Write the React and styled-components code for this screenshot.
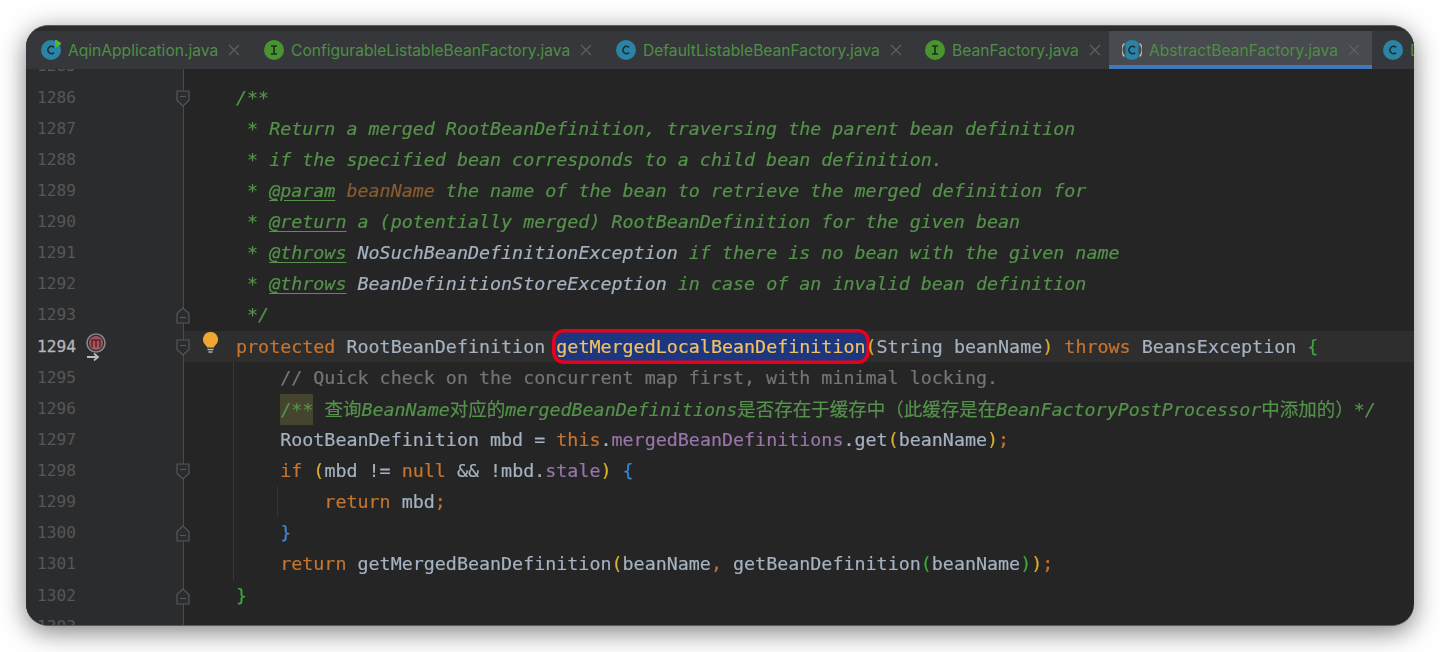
import styled, { createGlobalStyle } from 'styled-components';

const GlobalStyle = createGlobalStyle`
  html, body { margin: 0; background: #fff; }
`;

const MONO = `"DejaVu Sans Mono", "Noto Sans CJK SC", monospace`;

const Page = styled.div`
  height: 652px;
  box-sizing: border-box;
  padding: 25px 26px;
  overflow: hidden;
`;

const Window = styled.div`
  height: 601px;
  box-sizing: border-box;
  border-radius: 22px;
  border-top: 1px solid #595b5d;
  border-bottom: 1px solid #595b5d;
  overflow: hidden;
  background: #252525;
  box-shadow: 0 6px 26px rgba(0, 0, 0, 0.5);
`;

const Inner = styled.div`
  display: flex;
  flex-direction: column;
  height: 100%;
  filter: blur(0.55px);
`;

const TabBar = styled.div`
  flex: none;
  height: 38px;
  border-top: 5px solid #2b2c2e;
  background: #35373b;
  display: flex;
  overflow: hidden;
`;

const Tab = styled.div`
  flex: none;
  box-sizing: border-box;
  height: 38px;
  width: ${(p) => p.$width}px;
  padding: 4px 0 0 ${(p) => p.$pad}px;
  display: flex;
  align-items: center;
  gap: 7px;
  background: ${(p) => (p.$active ? '#474a4e' : 'transparent')};
  border-bottom: 4px solid ${(p) => (p.$active ? '#4179c0' : 'transparent')};
  font: 15.6px Inter, "Liberation Sans", sans-serif;
  color: #4f8f45;
  white-space: nowrap;
`;

const TabClose = styled.span`
  display: flex;
  margin-left: 3px;
  color: #5e6164;
`;

const Editor = styled.div`
  flex: 1;
  min-height: 0;
  overflow: hidden;
`;

const Lines = styled.div`
  margin-top: -18.6px;
`;

const Row = styled.div`
  display: flex;
  height: 31.125px;
  line-height: 31.125px;
  background: ${(p) => (p.$current ? '#2e2e2e' : 'transparent')};
`;

const Gutter = styled.div`
  flex: none;
  box-sizing: border-box;
  width: 158px;
  padding-left: 11px;
  background: #2b2c2e;
  border-right: 1px solid #4a4b4d;
  position: relative;
  display: flex;
  align-items: center;
`;

const LineNumber = styled.span`
  font: 400 16.2px/31px ${MONO};
  color: ${(p) => (p.$current ? '#b4b6b8' : '#55575a')};
  -webkit-text-stroke: ${(p) => (p.$current ? '0.3px' : '0')};
`;

const GutterBadge = styled.span`
  display: flex;
  margin-left: 9px;
  margin-top: 1px;
`;

const FoldMark = styled.span`
  position: absolute;
  right: -7px;
  top: 8px;
  display: flex;
`;

const Marker = styled.div`
  flex: none;
  width: 52px;
  box-sizing: border-box;
  padding: 0 0 0 18px;
  display: flex;
  align-items: flex-start;
`;

const Code = styled.pre`
  margin: 0;
  position: relative;
  flex: 1;
  font: 18.35px/31.125px ${MONO};
  color: #a5b2c2;
  white-space: pre;
  -webkit-text-stroke: 0.2px;
`;

const Guide = styled.i`
  position: absolute;
  top: 0;
  bottom: 0;
  left: ${(p) => p.$left}px;
  width: 1px;
  background: ${(p) => p.$color};
`;

const COLORS = {
  doc: '#55924b',
  tag: '#55924b',
  docRef: '#a5b2c2',
  param: '#8a5c2e',
  comment: '#757575',
  kw: '#c57530',
  field: '#9876aa',
  paren: '#d8ae30',
  blue: '#3b86d8',
  green: '#3fa63f',
};

const Token = styled.span`
  color: ${(p) => COLORS[p.$k] || '#a5b2c2'};
  font-style: ${(p) => (['doc', 'tag', 'docRef', 'param'].includes(p.$k) ? 'italic' : 'normal')};
  text-decoration: ${(p) => (p.$k === 'tag' ? 'underline' : 'none')};
  text-underline-offset: 3px;
`;

const DocStart = styled.span`
  display: inline-block;
  background: #45452e;
  color: #55924b;
  line-height: 31px;
`;

const Selected = styled.span`
  color: #f5c060;
  background: #1c3680;
  border-radius: 8px;
  padding: 3px 0;
  box-shadow: 0 0 0 0.5px #1c3680, 0 0 0 4px #ea0018;
`;

const Zh = styled.span`
  color: #55924b;
  font-family: "Noto Sans CJK SC", sans-serif;
  font-size: 18.5px;
`;

const CloseIcon = () => (
  <svg width="12" height="12" viewBox="0 0 12 12" fill="none" stroke="currentColor" strokeWidth="1.2">
    <path d="M1 1l10 10M11 1L1 11" />
  </svg>
);

const FileIcon = ({ kind }) => {
  const isInterface = kind === 'i';
  const fill = isInterface ? '#4a9331' : '#2b83a6';
  return (
    <svg width="20" height="20" viewBox="0 0 20 20" style={{ flex: 'none' }}>
      <circle cx="10" cy="10" r="10" fill={fill} />
      {kind === 'abstract' && (
        <>
          <rect x="-1" y="0" width="4.5" height="20" fill="#474a4e" />
          <rect x="16.5" y="0" width="4.5" height="20" fill="#474a4e" />
          <path d="M2.5 3.5a9 9 0 0 0 0 13M17.5 3.5a9 9 0 0 1 0 13" fill="none" stroke="#aeb2b5" strokeWidth="1.6" />
        </>
      )}
      {isInterface ? (
        <path d="M7 6h6M7 14h6M10 6v8" stroke="#20301c" strokeWidth="1.7" fill="none" />
      ) : (
        <path d="M13 7.4a3.6 3.6 0 1 0 0 5.2" stroke="#16313d" strokeWidth="1.7" fill="none" />
      )}
      {kind === 'run' && <path d="M14 -1l7 4.5-7 4.5z" fill="#4fb52f" />}
    </svg>
  );
};

const FoldIcon = ({ up }) => (
  <svg width="14" height="17" viewBox="0 0 14 17" fill="#2b2c2e" stroke="#55575a" strokeWidth="1.2">
    <path d={up ? 'M1 16V6.5L7 1l6 5.5V16z' : 'M1 1v9.5L7 16l6-5.5V1z'} />
    <path d={up ? 'M4 10.5h6' : 'M4 6.5h6'} fill="none" />
  </svg>
);

const OverrideBadge = () => (
  <svg width="22" height="28" viewBox="0 0 22 28">
    <circle cx="11" cy="10" r="9" fill="none" stroke="#84888b" strokeWidth="1.6" />
    <circle cx="11" cy="10" r="7" fill="#a8525f" />
    <path d="M7 14V7h8v7M11 7v7" fill="none" stroke="#54262c" strokeWidth="1.4" />
    <path d="M2 24h10M9 20.5l4 3.5-4 3.5" fill="none" stroke="#b5bcc2" strokeWidth="1.8" />
  </svg>
);

const Bulb = () => (
  <svg width="17" height="24" viewBox="0 0 17 24">
    <path d="M8.5 1a7.5 7.5 0 0 0-4.6 13.4c.8.7 1.1 1.4 1.1 2.1h7c0-.7.3-1.4 1.1-2.1A7.5 7.5 0 0 0 8.5 1z" fill="#f0a732" />
    <path d="M5.5 18.6h6M6.5 21h4" stroke="#b0b2b4" strokeWidth="1.5" fill="none" />
  </svg>
);

const tabs = [
  { name: 'AqinApplication.java', icon: 'run', width: 224, pad: 15 },
  { name: 'ConfigurableListableBeanFactory.java', icon: 'i', width: 352, pad: 14 },
  { name: 'DefaultListableBeanFactory.java', icon: 'c', width: 308, pad: 14 },
  { name: 'BeanFactory.java', icon: 'i', width: 199, pad: 15 },
  { name: 'AbstractBeanFactory.java', icon: 'abstract', width: 263, pad: 13, active: true },
  { name: 'DefaultSingletonBeanRegistry.java', icon: 'c', width: 320, pad: 11 },
];

const t = (k, text) => <Token $k={k}>{text}</Token>;

const lines = [
  { n: 1285, code: null },
  { n: 1286, fold: 'down', code: t('doc', '/**') },
  { n: 1287, code: t('doc', ' * Return a merged RootBeanDefinition, traversing the parent bean definition') },
  { n: 1288, code: t('doc', ' * if the specified bean corresponds to a child bean definition.') },
  {
    n: 1289,
    code: (<>{t('doc', ' * ')}{t('tag', '@param')}{t('doc', ' ')}{t('param', 'beanName')}{t('doc', ' the name of the bean to retrieve the merged definition for')}</>),
  },
  {
    n: 1290,
    code: (<>{t('doc', ' * ')}{t('tag', '@return')}{t('doc', ' a (potentially merged) RootBeanDefinition for the given bean')}</>),
  },
  {
    n: 1291,
    code: (<>{t('doc', ' * ')}{t('tag', '@throws')}{t('doc', ' ')}{t('docRef', 'NoSuchBeanDefinitionException')}{t('doc', ' if there is no bean with the given name')}</>),
  },
  {
    n: 1292,
    code: (<>{t('doc', ' * ')}{t('tag', '@throws')}{t('doc', ' ')}{t('docRef', 'BeanDefinitionStoreException')}{t('doc', ' in case of an invalid bean definition')}</>),
  },
  { n: 1293, fold: 'up', code: t('doc', ' */') },
  {
    n: 1294,
    current: true,
    fold: 'down',
    code: (<>{t('kw', 'protected')} RootBeanDefinition <Selected>getMergedLocalBeanDefinition</Selected>{t('paren', '(')}String beanName{t('paren', ')')} {t('kw', 'throws')} BeansException {t('green', '{')}</>),
  },
  { n: 1295, guide: true, code: <>{'    '}{t('comment', '// Quick check on the concurrent map first, with minimal locking.')}</> },
  {
    n: 1296,
    guide: true,
    code: (<>{'    '}<DocStart>/**</DocStart> <Zh>查询</Zh>{t('doc', 'BeanName')}<Zh>对应的</Zh>{t('doc', 'mergedBeanDefinitions')}<Zh>是否存在于缓存中（此缓存是在</Zh>{t('doc', 'BeanFactoryPostProcessor')}<Zh>中添加的）</Zh>{t('doc', '*/')}</>),
  },
  {
    n: 1297,
    guide: true,
    code: (<>{'    '}RootBeanDefinition mbd = {t('kw', 'this')}.{t('field', 'mergedBeanDefinitions')}.get{t('paren', '(')}beanName{t('paren', ')')}{t('kw', ';')}</>),
  },
  {
    n: 1298,
    guide: true,
    fold: 'down',
    code: (<>{'    '}{t('kw', 'if')} {t('paren', '(')}mbd != {t('kw', 'null')} && !mbd.{t('field', 'stale')}{t('paren', ')')} {t('blue', '{')}</>),
  },
  { n: 1299, guide: true, inner: true, code: <>{'        '}{t('kw', 'return')} mbd{t('kw', ';')}</> },
  { n: 1300, guide: true, fold: 'up', code: <>{'    '}{t('blue', '}')}</> },
  {
    n: 1301,
    guide: true,
    code: (<>{'    '}{t('kw', 'return')} getMergedBeanDefinition{t('paren', '(')}beanName{t('kw', ',')} getBeanDefinition{t('green', '(')}beanName{t('green', ')')}{t('paren', ')')}{t('kw', ';')}</>),
  },
  { n: 1302, fold: 'up', code: t('green', '}') },
  { n: 1303, code: null },
];

export default function App() {
  return (
    <>
      <GlobalStyle />
      <Page>
        <Window>
          <Inner>
            <TabBar>
              {tabs.map((tab) => (
                <Tab key={tab.name} $width={tab.width} $pad={tab.pad} $active={tab.active}>
                  <FileIcon kind={tab.icon} />
                  {tab.name}
                  <TabClose><CloseIcon /></TabClose>
                </Tab>
              ))}
            </TabBar>
            <Editor>
              <Lines>
                {lines.map((line) => (
                  <Row key={line.n} $current={line.current}>
                    <Gutter>
                      <LineNumber $current={line.current}>{line.n}</LineNumber>
                      {line.current && <GutterBadge><OverrideBadge /></GutterBadge>}
                      {line.fold && <FoldMark><FoldIcon up={line.fold === 'up'} /></FoldMark>}
                    </Gutter>
                    <Marker>{line.current && <Bulb />}</Marker>
                    <Code>
                      {line.guide && <Guide $left={-3} $color="#2f3f2d" />}
                      {line.inner && <Guide $left={41} $color="#23384a" />}
                      {line.code}
                    </Code>
                  </Row>
                ))}
              </Lines>
            </Editor>
          </Inner>
        </Window>
      </Page>
    </>
  );
}
